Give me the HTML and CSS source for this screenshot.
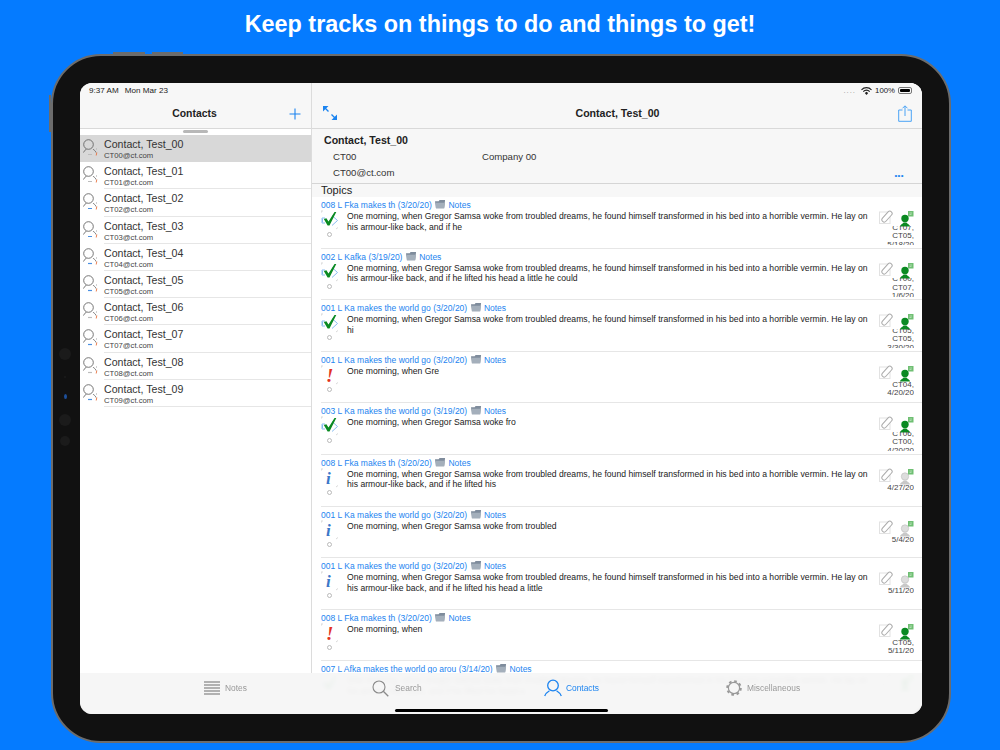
FILE: index.html
```html
<!DOCTYPE html>
<html lang="en">
<head>
<meta charset="utf-8">
<title>Contacts</title>
<link rel="stylesheet" href="styles.css">
</head>
<body>
<svg class="defs" width="0" height="0" aria-hidden="true">
  <symbol id="marks" viewBox="0 0 22 32">
    <path d="M0 3h2M0 3v2M15 21l2-1.500" fill="none" stroke="#c8c8c8" stroke-width=".7"/>
    <circle cx="8.500" cy="26.500" r="2" fill="#fff" stroke="#aaa" stroke-width=".8"/>
  </symbol>
  <symbol id="check" viewBox="0 0 22 32">
    <path d="M0 3h2M0 3v2M15 21l2-1.500" fill="none" stroke="#c8c8c8" stroke-width=".7"/>
    <circle cx="8.500" cy="26.500" r="2" fill="#fff" stroke="#aaa" stroke-width=".8"/>
    <path d="M1 10h3M1 10v5h3M1.500 11v3M11 7.500l5.500 5-5.500 5" fill="none" stroke="#7db4ee" stroke-width=".9"/>
    <path d="M2.800 11l2.600-.7 2.100 3.200L13.500 4h1.800L8.500 17.500H6.600z" fill="#0a8a22"/>
  </symbol>
  <symbol id="person-line" viewBox="0 0 18 20">
    <circle cx="5.500" cy="7.500" r="4.800" fill="none" stroke="#666" stroke-width=".9"/>
    <path d="M.5 15.500c.5-2 2.500-2.500 3-3.500M13 15.500c-.5-2-2.500-2.500-3-3.500" fill="none" stroke="#666" stroke-width=".9"/>
    <path d="M5 17.500h4" stroke="#bcbcbc" stroke-width="1.200"/>
    <path d="M13.500 11v2" stroke="#bbb" stroke-width=".7"/>
    <path d="M13.800 15.500l-.6 3" stroke="#e8703c" stroke-width=".9"/>
  </symbol>
  <symbol id="person-line-blue" viewBox="0 0 18 20">
    <circle cx="5.500" cy="7.500" r="4.800" fill="none" stroke="#666" stroke-width=".9"/>
    <path d="M.5 15.500c.5-2 2.500-2.500 3-3.500M13 15.500c-.5-2-2.500-2.500-3-3.500" fill="none" stroke="#666" stroke-width=".9"/>
    <path d="M5 17.500h4" stroke="#4a90e2" stroke-width="1.200"/>
    <path d="M13.500 11v2" stroke="#bbb" stroke-width=".7"/>
    <path d="M13.800 15.500l-.6 3" stroke="#e8703c" stroke-width=".9"/>
  </symbol>
  <symbol id="clip" viewBox="0 0 15 15">
    <rect x=".5" y="2" width="10.500" height="11.500" fill="none" stroke="#e2e2e2" stroke-width="1"/>
    <rect x="1.500" y="4.300" width="13" height="4.600" rx="2.300" transform="rotate(-48 8 6.600)" fill="#fff" stroke="#aaa" stroke-width="1"/>
  </symbol>
  <symbol id="green" viewBox="0 0 18 17">
    <circle cx="9" cy="8.500" r="3.700" fill="#0a8a22"/>
    <path d="M3.800 16.500c.5-2 3-2.500 3.700-4h3c.7 1.500 3.200 2 3.700 4z" fill="#0a8a22"/>
    <rect x="12" y="1" width="5.500" height="5.500" fill="#6fbf73"/>
    <path d="M13.500 3h2.500M13.500 4.500h2" stroke="#d8eed8" stroke-width=".6"/>
  </symbol>
  <symbol id="gray" viewBox="0 0 18 17">
    <circle cx="9" cy="8.500" r="3.700" fill="#ddd" stroke="#bbb" stroke-width=".6"/>
    <path d="M3.800 16.500c.5-2 3-2.500 3.700-4h3c.7 1.500 3.200 2 3.700 4z" fill="#c8c8c8"/>
    <rect x="12" y="1" width="5.500" height="5.500" fill="#6fbf73"/>
    <path d="M13.500 3h2.500M13.500 4.500h2" stroke="#d8eed8" stroke-width=".6"/>
  </symbol>
  <symbol id="folder" viewBox="0 0 12 10">
    <path d="M0 2h4l1-1.500h6L10 9.500H1z" fill="#7f8c9c"/>
    <path d="M1 3.500h10l-1 6H1z" fill="#a4afbb"/>
  </symbol>
</svg>

<h1 class="headline">Keep tracks on things to do and things to get!</h1>

<div class="device">
  <span class="hw hw-top-a"></span>
  <span class="hw hw-top-b"></span>
  <span class="hw hw-side"></span>
  <div class="sensors">
    <i class="sensor big"></i><i class="sensor tiny"></i><i class="sensor lens"></i><i class="sensor big"></i><i class="sensor mid"></i>
  </div>
  <div class="screen">
    <aside class="side">
      <header class="side-head">
        <div class="clock"><span>9:37 AM</span><span>Mon Mar 23</span></div>
        <div class="side-title">
          <span>Contacts</span>
          <svg class="plus" width="12" height="12" viewBox="0 0 12 12"><path d="M6 .5v11M.5 6h11" stroke="#1c84f0" stroke-width="1.100"/></svg>
        </div>
      </header>
      <div class="grabber"></div>
      <ul class="contacts">
        <li class="contact selected"><svg class="cicon" width="18" height="20"><use href="#person-line"/></svg><div><div class="cname">Contact, Test_00</div><div class="cmail">CT00@ct.com</div></div></li>
        <li class="contact"><svg class="cicon" width="18" height="20"><use href="#person-line"/></svg><div><div class="cname">Contact, Test_01</div><div class="cmail">CT01@ct.com</div></div></li>
        <li class="contact"><svg class="cicon" width="18" height="20"><use href="#person-line-blue"/></svg><div><div class="cname">Contact, Test_02</div><div class="cmail">CT02@ct.com</div></div></li>
        <li class="contact"><svg class="cicon" width="18" height="20"><use href="#person-line-blue"/></svg><div><div class="cname">Contact, Test_03</div><div class="cmail">CT03@ct.com</div></div></li>
        <li class="contact"><svg class="cicon" width="18" height="20"><use href="#person-line-blue"/></svg><div><div class="cname">Contact, Test_04</div><div class="cmail">CT04@ct.com</div></div></li>
        <li class="contact"><svg class="cicon" width="18" height="20"><use href="#person-line-blue"/></svg><div><div class="cname">Contact, Test_05</div><div class="cmail">CT05@ct.com</div></div></li>
        <li class="contact"><svg class="cicon" width="18" height="20"><use href="#person-line"/></svg><div><div class="cname">Contact, Test_06</div><div class="cmail">CT06@ct.com</div></div></li>
        <li class="contact"><svg class="cicon" width="18" height="20"><use href="#person-line-blue"/></svg><div><div class="cname">Contact, Test_07</div><div class="cmail">CT07@ct.com</div></div></li>
        <li class="contact"><svg class="cicon" width="18" height="20"><use href="#person-line"/></svg><div><div class="cname">Contact, Test_08</div><div class="cmail">CT08@ct.com</div></div></li>
        <li class="contact"><svg class="cicon" width="18" height="20"><use href="#person-line-blue"/></svg><div><div class="cname">Contact, Test_09</div><div class="cmail">CT09@ct.com</div></div></li>
      </ul>
    </aside>

    <main class="main">
      <header class="nav">
        <div class="status">
          <span class="signal">....</span>
          <svg width="11" height="8" viewBox="0 0 11 8"><path d="M.5 2.800a7 7 0 0 1 10 0M2.300 4.600a4.400 4.400 0 0 1 6.400 0" fill="none" stroke="#222" stroke-width="1.200"/><path d="M3.800 6l1.700-1.300L7.200 6 5.500 8z" fill="#222"/></svg>
          <span>100%</span>
          <span class="battery"><i class="battery-fill"></i></span>
        </div>
        <div class="nav-row">
          <svg width="14" height="14" viewBox="0 0 14 14"><path d="M0 0h5.500L0 5.500zM14 14H8.500L14 8.500z" fill="#1c84f0"/><path d="M2 2l3.500 3.500M8.500 8.500L12 12" stroke="#1c84f0" stroke-width="1.400"/></svg>
          <span class="nav-title">Contact, Test_00</span>
          <svg width="14" height="17" viewBox="0 0 14 17"><path d="M4.500 5H.7v11.300h12.600V5H9.500M7 11V1M4.500 3.300L7 .8l2.500 2.500" fill="none" stroke="#4aa3f5" stroke-width="1"/></svg>
        </div>
      </header>

      <section class="card">
        <h2 class="card-name">Contact, Test_00</h2>
        <div class="card-row"><span class="card-code">CT00</span><span>Company 00</span></div>
        <div class="card-row card-last"><span>CT00@ct.com</span><span class="more">•••</span></div>
      </section>

      <h3 class="topics">Topics</h3>

      <article class="topic">
        <div class="topic-link">008 L Fka makes th (3/20/20) <svg class="folder" width="11" height="10"><use href="#folder"/></svg> Notes</div>
        <svg class="state" width="22" height="32"><use href="#check"/></svg>
        <p class="topic-text">One morning, when Gregor Samsa woke from troubled dreams, he found himself transformed in his bed into a horrible vermin. He lay on his armour-like back, and if he</p>
        <div class="topic-side"><div class="side-icons"><svg width="15" height="15"><use href="#clip"/></svg><svg width="18" height="17"><use href="#green"/></svg></div><div class="who who3"><span>CT07,<br>CT05,<br>5/18/20</span></div></div>
      </article>
      <article class="topic">
        <div class="topic-link">002 L Kafka (3/19/20) <svg class="folder" width="11" height="10"><use href="#folder"/></svg> Notes</div>
        <svg class="state" width="22" height="32"><use href="#check"/></svg>
        <p class="topic-text">One morning, when Gregor Samsa woke from troubled dreams, he found himself transformed in his bed into a horrible vermin. He lay on his armour-like back, and if he lifted his head a little he could</p>
        <div class="topic-side"><div class="side-icons"><svg width="15" height="15"><use href="#clip"/></svg><svg width="18" height="17"><use href="#green"/></svg></div><div class="who who3"><span>CT00,<br>CT07,<br>1/6/20</span></div></div>
      </article>
      <article class="topic">
        <div class="topic-link">001 L Ka makes the world go (3/20/20) <svg class="folder" width="11" height="10"><use href="#folder"/></svg> Notes</div>
        <svg class="state" width="22" height="32"><use href="#check"/></svg>
        <p class="topic-text">One morning, when Gregor Samsa woke from troubled dreams, he found himself transformed in his bed into a horrible vermin. He lay on hi</p>
        <div class="topic-side"><div class="side-icons"><svg width="15" height="15"><use href="#clip"/></svg><svg width="18" height="17"><use href="#green"/></svg></div><div class="who who3"><span>CT05,<br>CT05,<br>3/30/20</span></div></div>
      </article>
      <article class="topic">
        <div class="topic-link">001 L Ka makes the world go (3/20/20) <svg class="folder" width="11" height="10"><use href="#folder"/></svg> Notes</div>
        <div class="state mark"><span class="bang">!</span><svg width="22" height="32"><use href="#marks"/></svg></div>
        <p class="topic-text">One morning, when Gre</p>
        <div class="topic-side"><div class="side-icons"><svg width="15" height="15"><use href="#clip"/></svg><svg width="18" height="17"><use href="#green"/></svg></div><div class="who">CT04,<br>4/20/20</div></div>
      </article>
      <article class="topic">
        <div class="topic-link">003 L Ka makes the world go (3/19/20) <svg class="folder" width="11" height="10"><use href="#folder"/></svg> Notes</div>
        <svg class="state" width="22" height="32"><use href="#check"/></svg>
        <p class="topic-text">One morning, when Gregor Samsa woke fro</p>
        <div class="topic-side"><div class="side-icons"><svg width="15" height="15"><use href="#clip"/></svg><svg width="18" height="17"><use href="#green"/></svg></div><div class="who who3"><span>CT06,<br>CT00,<br>4/20/20</span></div></div>
      </article>
      <article class="topic">
        <div class="topic-link">008 L Fka makes th (3/20/20) <svg class="folder" width="11" height="10"><use href="#folder"/></svg> Notes</div>
        <div class="state mark"><span class="info">i</span><svg width="22" height="32"><use href="#marks"/></svg></div>
        <p class="topic-text">One morning, when Gregor Samsa woke from troubled dreams, he found himself transformed in his bed into a horrible vermin. He lay on his armour-like back, and if he lifted his</p>
        <div class="topic-side"><div class="side-icons"><svg width="15" height="15"><use href="#clip"/></svg><svg width="18" height="17"><use href="#gray"/></svg></div><div class="who">4/27/20</div></div>
      </article>
      <article class="topic">
        <div class="topic-link">001 L Ka makes the world go (3/20/20) <svg class="folder" width="11" height="10"><use href="#folder"/></svg> Notes</div>
        <div class="state mark"><span class="info">i</span><svg width="22" height="32"><use href="#marks"/></svg></div>
        <p class="topic-text">One morning, when Gregor Samsa woke from troubled</p>
        <div class="topic-side"><div class="side-icons"><svg width="15" height="15"><use href="#clip"/></svg><svg width="18" height="17"><use href="#gray"/></svg></div><div class="who">5/4/20</div></div>
      </article>
      <article class="topic">
        <div class="topic-link">001 L Ka makes the world go (3/20/20) <svg class="folder" width="11" height="10"><use href="#folder"/></svg> Notes</div>
        <div class="state mark"><span class="info">i</span><svg width="22" height="32"><use href="#marks"/></svg></div>
        <p class="topic-text">One morning, when Gregor Samsa woke from troubled dreams, he found himself transformed in his bed into a horrible vermin. He lay on his armour-like back, and if he lifted his head a little</p>
        <div class="topic-side"><div class="side-icons"><svg width="15" height="15"><use href="#clip"/></svg><svg width="18" height="17"><use href="#gray"/></svg></div><div class="who">5/11/20</div></div>
      </article>
      <article class="topic">
        <div class="topic-link">008 L Fka makes th (3/20/20) <svg class="folder" width="11" height="10"><use href="#folder"/></svg> Notes</div>
        <div class="state mark"><span class="bang">!</span><svg width="22" height="32"><use href="#marks"/></svg></div>
        <p class="topic-text">One morning, when</p>
        <div class="topic-side"><div class="side-icons"><svg width="15" height="15"><use href="#clip"/></svg><svg width="18" height="17"><use href="#green"/></svg></div><div class="who">CT05,<br>5/11/20</div></div>
      </article>
      <article class="topic">
        <div class="topic-link">007 L Afka makes the world go arou (3/14/20) <svg class="folder" width="11" height="10"><use href="#folder"/></svg> Notes</div>
        <svg class="state" width="22" height="32"><use href="#check"/></svg>
        <p class="topic-text">One morning, when Gregor Samsa woke from troubled dreams, he found himself transformed in his bed into a horrible vermin. He lay on his armour-like back, and if he lifted his head a</p>
        <div class="topic-side"><div class="side-icons"><svg width="15" height="15"><use href="#clip"/></svg><svg width="18" height="17"><use href="#green"/></svg></div></div>
      </article>
    </main>

    <nav class="tabs">
      <div class="tab tab-notes">
        <svg width="16" height="14" viewBox="0 0 16 14"><path d="M0 1h16M0 4h16M0 7h16M0 10h16M0 13h16" stroke="#9a9a9a" stroke-width="1.700"/></svg>
        <span>Notes</span>
      </div>
      <div class="tab tab-search">
        <svg width="17" height="17" viewBox="0 0 17 17"><circle cx="7" cy="7" r="6" fill="none" stroke="#8a8a8a" stroke-width="1.100"/><path d="M11.300 11.300l5 5" stroke="#8a8a8a" stroke-width="1.300"/></svg>
        <span>Search</span>
      </div>
      <div class="tab tab-contacts">
        <svg width="18" height="18" viewBox="0 0 18 18"><circle cx="9" cy="6.500" r="5.300" fill="none" stroke="#1c84f0" stroke-width="1.300"/><path d="M.7 17c1-3 3.500-4.500 4.800-5.300M17.300 17c-1-3-3.500-4.500-4.800-5.300" fill="none" stroke="#1c84f0" stroke-width="1.300"/></svg>
        <span>Contacts</span>
      </div>
      <div class="tab tab-misc">
        <svg width="16" height="16" viewBox="0 0 16 16"><circle cx="8" cy="8" r="5.600" fill="none" stroke="#999" stroke-width="1.200"/><circle cx="8" cy="8" r="6.800" fill="none" stroke="#999" stroke-width="2" stroke-dasharray="2.600 2.740"/></svg>
        <span>Miscellaneous</span>
      </div>
      <span class="home"></span>
    </nav>
  </div>
</div>
</body>
</html>
```
FILE: styles.css
```css
* { box-sizing: border-box; }
html, body { margin: 0; padding: 0; }
body {
  width: 1000px;
  height: 750px;
  overflow: hidden;
  background: #057bff;
  font-family: "Liberation Sans", Arial, sans-serif;
  color: #222;
}
.defs { display: block; height: 0; }
.headline {
  margin: 0;
  height: 54px;
  padding-top: 10px;
  text-align: center;
  color: #fff;
  font-size: 23.400px;
  line-height: 29px;
  font-weight: 700;
}
.device {
  position: relative;
  width: 900px;
  height: 689px;
  margin-left: 51px;
  padding: 27px;
  background: #111;
  border: 2px solid #6c6c6c;
  border-radius: 50px;
}
.hw { position: absolute; background: #6c6c6c; }
.hw-top-a { left: 60px; top: -4px; width: 32px; height: 2px; }
.hw-top-b { left: 99px; top: -4px; width: 31px; height: 2px; }
.hw-side { left: -4px; top: 39px; width: 2px; height: 37px; }
.sensors {
  position: absolute;
  left: 0;
  top: 289px;
  width: 24px;
  display: flex;
  flex-direction: column;
  align-items: center;
}
.sensor { display: block; border-radius: 50%; background: #1b1b1b; }
.sensor.big { width: 12px; height: 12px; margin: 3px 0; }
.sensor.tiny { width: 2px; height: 2px; margin: 13px 0 8px; }
.sensor.lens { width: 3px; height: 5px; margin: 7.500px 0 12.500px; background: #1d4f9a; }
.sensor.mid { width: 10px; height: 10px; margin-top: 7px; }
.screen {
  position: relative;
  display: flex;
  width: 842px;
  height: 631px;
  overflow: hidden;
  background: #fff;
  border-radius: 12px;
}
.side {
  flex: 0 0 232px;
  border-right: 1px solid #dcdcdc;
}
.side-head {
  height: 46px;
  background: #f7f7f7;
  border-bottom: 1px solid #d9d9d9;
}
.clock {
  display: flex;
  gap: 6px;
  padding: 3px 0 0 9px;
  font-size: 8.100px;
  line-height: 9px;
  color: #222;
}
.side-title {
  position: relative;
  margin-top: 10px;
  text-align: center;
  font-size: 10.400px;
  line-height: 18px;
  font-weight: 700;
  padding-right: 2px;
}
.plus { position: absolute; right: 10px; top: 3px; }
.grabber {
  width: 25px;
  height: 3px;
  margin: 1px auto 2px;
  border-radius: 2px;
  background: #b8b8b8;
}
.contacts { margin: 0; padding: 0; list-style: none; }
.contact {
  display: flex;
  height: 27.200px;
  padding-left: 3px;
  position: relative;
}
.contact::after {
  content: "";
  position: absolute;
  left: 24px;
  right: 0;
  bottom: 0;
  height: 1px;
  background: #e6e6e6;
}
.contact.selected { background: #d8d8d8; }
.contact.selected::after { display: none; }
.cicon { margin-top: 2px; margin-right: 3px; flex: none; }
.cname { margin-top: 3px; font-size: 10.600px; line-height: 13px; color: #333; }
.cmail { font-size: 7.700px; line-height: 9px; color: #444; }
.main {
  flex: 1;
  min-width: 0;
  background: #fff;
}
.nav {
  height: 46px;
  background: #f7f7f7;
  border-bottom: 1px solid #d9d9d9;
}
.status {
  display: flex;
  justify-content: flex-end;
  align-items: center;
  gap: 3px;
  height: 15px;
  padding-right: 10px;
  font-size: 7.800px;
  color: #222;
}
.signal { color: #999; letter-spacing: 1px; margin-right: 2px; line-height: 6px; }
.battery {
  display: block;
  width: 14px;
  height: 6.500px;
  padding: .7px;
  border: .7px solid #777;
  border-radius: 2px;
}
.battery-fill {
  display: block;
  height: 100%;
  border-radius: 1px;
  background: #000;
}
.nav-row {
  display: flex;
  justify-content: space-between;
  align-items: center;
  height: 30px;
  padding: 0 10px 0 11px;
}
.nav-title { font-size: 10.600px; font-weight: 700; }
.card {
  height: 55px;
  padding: 4px 0 0 12px;
  background: #f7f7f7;
  border-bottom: 1px solid #d5d5d5;
}
.card-name { margin: 0; font-size: 10.600px; line-height: 14px; font-weight: 700; }
.card-row {
  display: flex;
  margin-top: 4px;
  font-size: 9.600px;
  line-height: 12px;
  color: #333;
  padding-left: 9px;
}
.card-code { width: 149px; }
.card-last { justify-content: space-between; padding-right: 18px; }
.more { font-size: 8px; color: #1c84f0; letter-spacing: .4px; line-height: 17px; }
.topics {
  margin: 0;
  height: 13px;
  padding-left: 9px;
  background: #f7f7f7;
  font-size: 11px;
  line-height: 13px;
  font-weight: 400;
  color: #222;
}
.topic {
  display: grid;
  grid-template-columns: 26px 525px 1fr;
  grid-template-rows: 15px 1fr;
  height: 51.600px;
  padding: 1px 8px 0 9px;
  overflow: hidden;
  background: #fff;
  position: relative;
}
.topic::after {
  content: "";
  position: absolute;
  left: 9px;
  right: 0;
  bottom: 0;
  height: 1px;
  background: #e6e6e6;
}
.topic-link {
  grid-column: 1 / 3;
  font-size: 8.500px;
  line-height: 14px;
  color: #1c84f0;
  white-space: nowrap;
}
.folder { vertical-align: -1px; margin: 0 0 0 1px; }
.state { grid-row: 2; grid-column: 1; display: block; margin-top: -5px; }
.mark { position: relative; width: 22px; height: 32px; }
.mark svg { display: block; }
.bang, .info {
  position: absolute;
  left: 5px;
  top: 3px;
  font-family: "Liberation Serif", serif;
  font-weight: 700;
  font-style: italic;
  font-size: 19px;
  line-height: 20px;
}
.bang { color: #e2331c; }
.info { color: #3c78c8; font-size: 17px; }
.topic-text {
  grid-row: 2;
  grid-column: 2;
  margin: -2px 0 0;
  font-size: 8.630px;
  line-height: 10.500px;
  color: #222;
}
.topic-side {
  grid-row: 2;
  grid-column: 3;
  margin-top: -3px;
  min-width: 0;
}
.side-icons { display: flex; justify-content: flex-end; gap: 2px; height: 16px; }
.who {
  height: 19px;
  overflow: hidden;
  font-size: 8px;
  line-height: 8.500px;
  text-align: right;
  color: #444;
}
.who3 span { display: block; margin-top: -2.500px; }
.tabs {
  position: absolute;
  left: 0;
  right: 0;
  bottom: 0;
  height: 41px;
  display: flex;
  background: rgba(246, 246, 246, .96);
  backdrop-filter: blur(2px);
  color: #999;
  font-size: 8.400px;
}
.tab { position: absolute; top: 6px; display: flex; align-items: center; gap: 5px; height: 18px; }
.tab-notes { left: 124px; }
.tab-search { left: 292px; gap: 6px; }
.tab-contacts { left: 464px; gap: 4px; color: #1c84f0; }
.tab-misc { left: 646px; gap: 5px; }
.home {
  position: absolute;
  left: 315px;
  bottom: 2px;
  width: 213px;
  height: 3.500px;
  border-radius: 2px;
  background: #000;
}
```
